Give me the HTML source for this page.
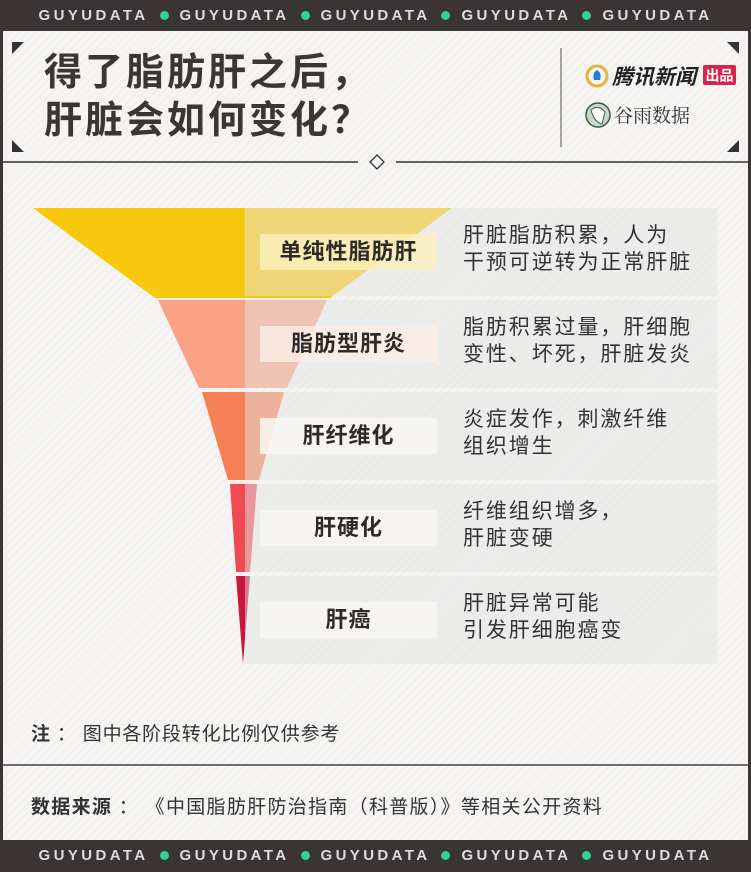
<!DOCTYPE html>
<html><head><meta charset="utf-8">
<style>
*{margin:0;padding:0;box-sizing:border-box}
body{width:751px;height:872px;overflow:hidden;background:#3a3434;font-family:"Liberation Sans","Noto Sans CJK SC",sans-serif;position:relative}
.main{position:absolute;left:3px;top:31px;width:745px;height:809px;background:#f5f4f2;background-image:repeating-linear-gradient(-45deg,rgba(0,0,0,0.035) 0 1px,transparent 1px 6px)}
.bar{position:absolute;left:0;width:751px;height:31px;color:#ddd;font-size:15px;letter-spacing:3.4px;font-weight:bold;display:flex;justify-content:center;align-items:center;gap:0}
.bar span{margin:0 11px}
.dot{display:inline-block;width:9px;height:9px;border-radius:50%;background:#2fd39a}
.t{position:absolute;color:#3a3636;font-weight:bold;font-size:38px;left:44px;line-height:47px;letter-spacing:3px}
.abs{position:absolute}
.panel{position:absolute;left:245px;width:472px;height:88px;background:rgba(228,228,228,0.5)}
.lab{position:absolute;left:260px;width:177px;height:36px;background:rgba(248,247,245,0.85);font-weight:bold;font-size:22px;letter-spacing:1px;color:#2e2a2a;text-align:center;line-height:36px}
.desc{position:absolute;left:463px;font-size:21px;letter-spacing:1.9px;line-height:27px;color:#333}
</style></head><body>
<div class="bar" style="top:0"><span>GUYUDATA</span><i class="dot"></i><span>GUYUDATA</span><i class="dot"></i><span>GUYUDATA</span><i class="dot"></i><span>GUYUDATA</span><i class="dot"></i><span>GUYUDATA</span></div>
<div class="main"></div>
<div class="bar" style="top:840px"><span>GUYUDATA</span><i class="dot"></i><span>GUYUDATA</span><i class="dot"></i><span>GUYUDATA</span><i class="dot"></i><span>GUYUDATA</span><i class="dot"></i><span>GUYUDATA</span></div>
<svg class="abs" style="left:0;top:0" width="751" height="872">
<polygon points="12,42 24,42 12,54" fill="#333"/>
<polygon points="739,42 727,42 739,54" fill="#333"/>
<polygon points="12,152 24,152 12,140" fill="#333"/>
<polygon points="739,152 727,152 739,140" fill="#333"/>
<line x1="3" y1="162" x2="358" y2="162" stroke="#333" stroke-width="1.5"/>
<line x1="396" y1="162" x2="748" y2="162" stroke="#333" stroke-width="1.5"/>
<polygon points="377,155 384,162 377,169 370,162" fill="none" stroke="#333" stroke-width="1.3"/>
<line x1="561" y1="48" x2="561" y2="147" stroke="#888" stroke-width="1.5"/>
<line x1="3" y1="765" x2="748" y2="765" stroke="#444" stroke-width="1.5"/>
<polygon points="33,208 452,208 330,298 155,298" fill="#f8c80c"/>
<polygon points="158,300 327,300 287,388 199,388" fill="#f9a284"/>
<polygon points="202,392 284,392 259,480 228,480" fill="#f58055"/>
<polygon points="230,484 257,484 250,572 236,572" fill="#ee4a52"/>
<polygon points="236,576 250,576 243,664" fill="#c8173a"/>
<circle cx="597" cy="76" r="10" fill="none" stroke="#e2b43b" stroke-width="3"/>
<path d="M597 70 q5 3 3 10 h-6 q-2-7 3-10z" fill="#1f7ed6"/>
<rect x="703" y="65" width="33" height="20" rx="2" fill="#d8244a"/>
<text x="719.5" y="80.5" font-size="14" font-weight="bold" fill="#fff" text-anchor="middle" font-family="Noto Sans CJK SC,sans-serif">出品</text>
<circle cx="598" cy="115" r="12" fill="#c7d9c8" stroke="#3c5a48" stroke-width="1.5"/>
<path d="M591 110 q8-6 14 2 l-3 12 q-8-2-11-14z" fill="#fff" stroke="#3c5a48"/>
</svg>
<div class="t" style="top:50px">得了脂肪肝之后，</div>
<div class="t" style="top:98px">肝脏会如何变化？</div>
<div class="abs" style="left:612px;top:61px;font-size:21px;font-weight:bold;color:#222;font-style:italic">腾讯新闻</div>
<div class="abs" style="left:614px;top:101px;font-size:19px;color:#333;font-family:'Noto Serif CJK SC',serif">谷雨数据</div>
<div class="panel" style="top:208px"></div>
<div class="panel" style="top:300px"></div>
<div class="panel" style="top:392px"></div>
<div class="panel" style="top:484px"></div>
<div class="panel" style="top:576px"></div>
<div class="lab" style="top:234px;background:rgba(252,240,190,0.8)">单纯性脂肪肝</div>
<div class="lab" style="top:326px;background:rgba(252,236,228,0.85)">脂肪型肝炎</div>
<div class="lab" style="top:418px">肝纤维化</div>
<div class="lab" style="top:510px">肝硬化</div>
<div class="lab" style="top:602px">肝癌</div>
<div class="desc" style="top:222px">肝脏脂肪积累，人为<br>干预可逆转为正常肝脏</div>
<div class="desc" style="top:314px">脂肪积累过量，肝细胞<br>变性、坏死，肝脏发炎</div>
<div class="desc" style="top:406px">炎症发作，刺激纤维<br>组织增生</div>
<div class="desc" style="top:498px">纤维组织增多，<br>肝脏变硬</div>
<div class="desc" style="top:590px">肝脏异常可能<br>引发肝细胞癌变</div>
<div class="abs" style="left:31px;top:719px;font-size:19px;letter-spacing:0.8px;color:#333"><b>注</b>&nbsp;：&nbsp;图中各阶段转化比例仅供参考</div>
<div class="abs" style="left:31px;top:792px;font-size:19px;letter-spacing:1.3px;color:#333"><b>数据来源</b>&nbsp;：&nbsp;《中国脂肪肝防治指南（科普版）》等相关公开资料</div>
</body></html>
